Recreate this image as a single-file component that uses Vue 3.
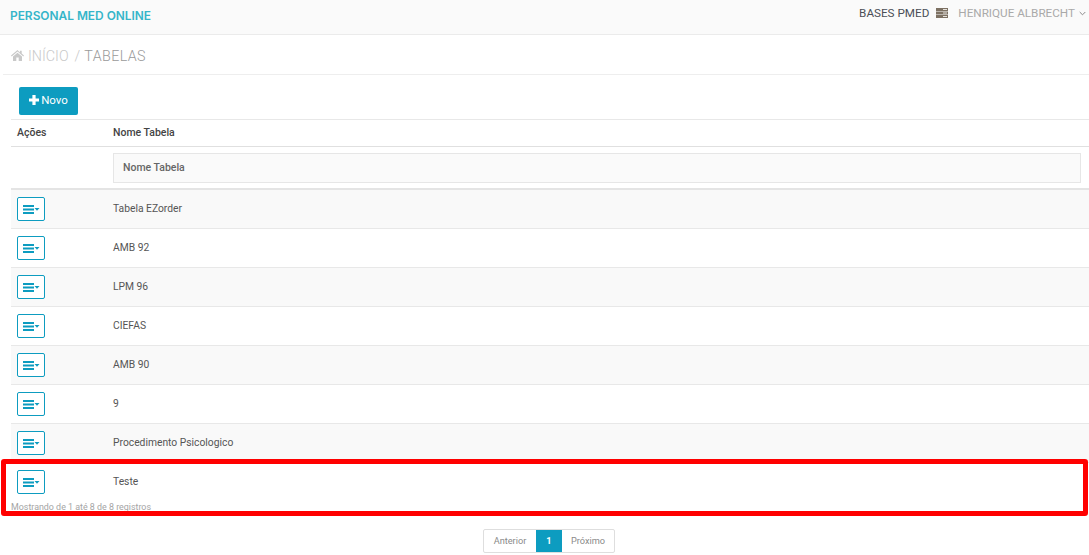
<script setup>
const rows = ['Tabela EZorder','AMB 92','LPM 96','CIEFAS','AMB 90','9','Procedimento Psicologico','Teste']
</script>

<template>
  <div class="page">
    <header class="topbar">
      <span class="brand">PERSONAL MED ONLINE</span>
      <div class="topright">
        <span class="bases">BASES PMED</span>
        <svg class="baseicon" width="12" height="10" viewBox="0 0 12 10"><path fill="#7d7163" d="M0 0h12v3H0zM0 3.6h12v2.8H0zM0 7h12v3H0z"/><path fill="#e6e2dc" d="M7 1h4v1H7zM7 4.5h4v1H7zM7 8h4v1H7z"/></svg>
        <span class="user">HENRIQUE ALBRECHT</span>
        <svg class="chev" width="7" height="5" viewBox="0 0 7 5"><path d="M.7 1l2.8 2.8L6.3 1" fill="none" stroke="#8a8a8a" stroke-width="1"/></svg>
      </div>
    </header>
    <nav class="crumbs">
      <svg width="13" height="11" viewBox="0 0 13 11"><path fill="#c9c9c9" d="M6.5 0L0 5.6l.7.8L6.5 1.6l5.8 4.8.7-.8-2.3-2V.7H8.9v1.9zM2 6.6V11h3.3V7.6h2.4V11H11V6.6L6.5 2.8z"/></svg>
      <span class="home">INÍCIO</span>
      <span class="sep">/</span>
      <span class="cur">TABELAS</span>
    </nav>
    <div class="toolbar">
      <button class="novo"><svg width="10" height="10" viewBox="0 0 10 10"><path fill="#fff" d="M3.4 0h3.2v3.4H10v3.2H6.6V10H3.4V6.6H0V3.4h3.4z"/></svg>Novo</button>
    </div>
    <div class="tablewrap">
      <div class="row head">
        <div class="c1">Ações</div>
        <div class="c2">Nome Tabela</div>
      </div>
      <div class="row filter">
        <div class="c1"></div>
        <div class="filterbox">Nome Tabela</div>
      </div>
      <div v-for="(r, i) in rows" :key="r" class="row data" :class="{ odd: i % 2 === 0, last: i === rows.length - 1 }">
        <div class="c1">
          <button class="act">
            <svg width="17" height="9" viewBox="0 0 17 9"><path fill="#0d9cc0" d="M0 0h11v2H0zM0 3.5h11v2H0zM0 7h11v2H0zM11.5 3h5L14 5.8z"/></svg>
          </button>
        </div>
        <div class="c2 txt">{{ r }}</div>
      </div>
      <div class="info">Mostrando de 1 até 8 de 8 registros</div>
    </div>
    <div class="pager">
      <span class="pg a">Anterior</span>
      <span class="pg on">1</span>
      <span class="pg p">Próximo</span>
    </div>
    <div class="highlight"></div>
  </div>
</template>

<style>
html, body { margin: 0; background: #fff; }
</style>

<style scoped>
.page { position: relative; width: 1089px; height: 555px; overflow: hidden; font-family: Roboto, "Open Sans", sans-serif; color: #555; background: #fff; }
.topbar { height: 34px; background: #fafafa; border-bottom: 1px solid #ebebeb; display: flex; justify-content: space-between; padding: 0 3px 0 10px; }
.brand { font-family: Inter, sans-serif; font-size: 11.9px; font-weight: 600; color: #35b5c9; line-height: 32px; }
.topright { display: flex; align-items: center; height: 26px; font-size: 11.7px; }
.bases { color: #4a4f57; }
.baseicon { margin: 0 10px 0 7px; }
.user { color: #a9a9a9; }
.chev { margin-left: 4px; }
.crumbs { margin-left: 3px; padding: 2px 0 0 8px; box-sizing: border-box; height: 40px; border-bottom: 1px solid #eeeeee; display: flex; align-items: center; font-size: 14.3px; font-weight: 300; gap: 4px; }
.home { color: #c9c9c9; }
.sep { color: #c9c9c9; margin-left: 2px; }
.cur { color: #9a9a9a; letter-spacing: .4px; }
.toolbar { padding: 12px 0 4px 19px; display: flex; }
.novo { width: 59px; height: 28px; border: 0; border-radius: 2px; background: #0d9cc0; color: #fff; font: 400 11.5px/26px Roboto, sans-serif; display: flex; align-items: center; justify-content: center; gap: 2px; padding: 0 0 2px; }
.tablewrap { margin-left: 11px; border-top: 1px solid #e8e8e8; position: relative; }
.row { display: flex; align-items: center; }
.c1 { width: 102px; padding-left: 6px; box-sizing: border-box; flex: none; }
.head { height: 25px; padding-bottom: 1px; border-bottom: 1px solid #e0e0e0; font-size: 10.5px; font-weight: 500; color: #444; }
.filter { height: 35px; padding-top: 6px; align-items: flex-start; border-bottom: 2px solid #e4e4e4; }
.filterbox { width: 968px; height: 30px; box-sizing: border-box; border: 1px solid #e6e6e6; background: #fafafa; font-size: 10.5px; font-weight: 500; color: #666; line-height: 28px; padding-left: 9px; }
.data { height: 38px; border-bottom: 1px solid #e8e8e8; font-size: 10.3px; color: #555; }
.txt { padding-bottom: 2px; }
.data.odd { background: #f9f9f9; }
.data.last { border-bottom: 0; }
.act { width: 28px; height: 24px; padding: 0 0 0 5px; border: 1px solid #0d9cc0; border-radius: 2px; background: #fff; display: flex; align-items: center; }
.info { font-size: 8.9px; color: #a5a5a5; line-height: 12px; }
.pager { position: absolute; left: 483px; top: 529px; width: 132px; height: 24px; display: flex; border: 1px solid #dedede; border-radius: 2px; box-sizing: border-box; }
.pg { font-size: 9.2px; color: #8a8a8a; line-height: 22px; text-align: center; }
.pg.a { width: 52px; }
.pg.p { width: 52px; }
.pg.on { width: 26px; background: #0d9cc0; color: #fff; font-weight: 700; }
.highlight { position: absolute; left: 1px; top: 459px; width: 1087px; height: 57px; box-sizing: border-box; border: 5px solid #ff0000; border-radius: 3px; pointer-events: none; }
</style>
